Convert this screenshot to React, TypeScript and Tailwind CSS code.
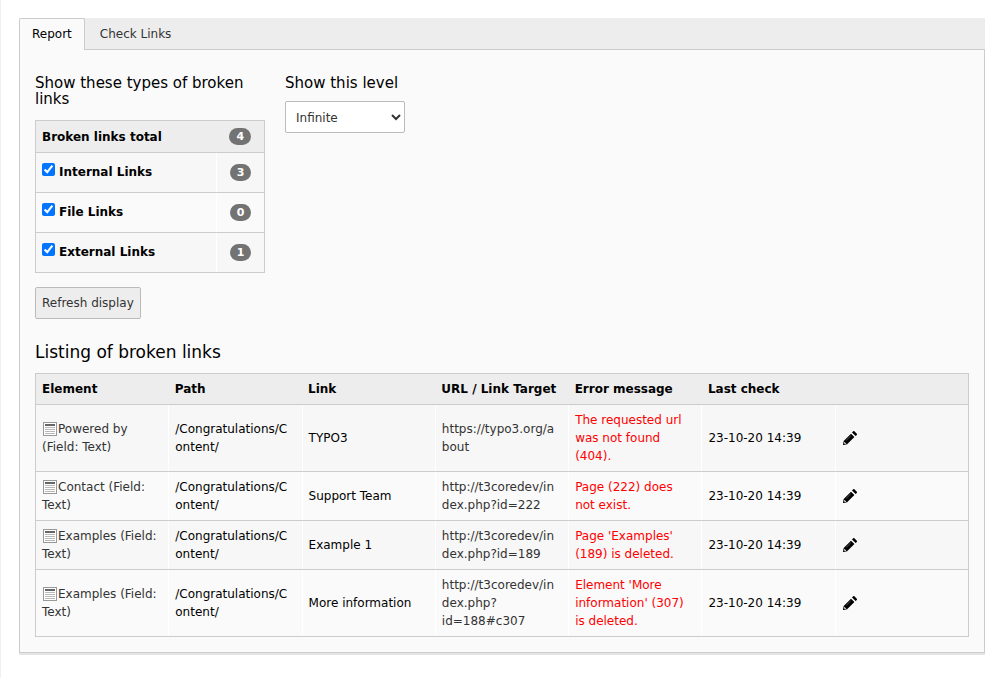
import React, { useState } from 'react';

interface LinkType {
  id: string;
  label: string;
  count: number;
}

interface BrokenLink {
  element: string;
  path: string;
  link: string;
  target: string;
  error: string;
  lastCheck: string;
}

const linkTypes: LinkType[] = [
  { id: 'internal', label: 'Internal Links', count: 3 },
  { id: 'file', label: 'File Links', count: 0 },
  { id: 'external', label: 'External Links', count: 1 },
];

const columns = ['Element', 'Path', 'Link', 'URL / Link Target', 'Error message', 'Last check', ''];

const brokenLinks: BrokenLink[] = [
  {
    element: 'Powered by (Field: Text)',
    path: '/Congratulations/Content/',
    link: 'TYPO3',
    target: 'https://typo3.org/about',
    error: 'The requested url was not found (404).',
    lastCheck: '23-10-20 14:39',
  },
  {
    element: 'Contact (Field: Text)',
    path: '/Congratulations/Content/',
    link: 'Support Team',
    target: 'http://t3coredev/index.php?id=222',
    error: 'Page (222) does not exist.',
    lastCheck: '23-10-20 14:39',
  },
  {
    element: 'Examples (Field: Text)',
    path: '/Congratulations/Content/',
    link: 'Example 1',
    target: 'http://t3coredev/index.php?id=189',
    error: "Page 'Examples' (189) is deleted.",
    lastCheck: '23-10-20 14:39',
  },
  {
    element: 'Examples (Field: Text)',
    path: '/Congratulations/Content/',
    link: 'More information',
    target: 'http://t3coredev/index.php?id=188#c307',
    error: "Element 'More information' (307) is deleted.",
    lastCheck: '23-10-20 14:39',
  },
];

function TextElementIcon() {
  return (
    <svg viewBox="0 0 16 16" className="inline-block h-4 w-4 align-[-4px]" aria-hidden="true">
      <rect x="1.5" y="1.5" width="13" height="13" fill="#fff" stroke="#999" />
      <path d="M3 3h10v2H3z" fill="#666" />
      <path d="M3 6h10v1H3zM3 8h10v1H3zM3 10h10v1H3zM3 12h10v1H3z" fill="#b9b9b9" />
    </svg>
  );
}

function PencilIcon() {
  return (
    <svg viewBox="0 0 16 16" className="h-4 w-4" aria-hidden="true">
      <path
        d="M11.2 1.3a.9.9 0 0 1 1.2 0l2.4 2.4a.9.9 0 0 1 0 1.2l-1.2 1.2-3.6-3.6zM9 3.7l3.4 3.4-7.3 7.2-3.6.7a.5.5 0 0 1-.5-.5l.7-3.6z"
        fill="#000"
      />
      <path d="M8.8 5.8 4.2 10.4" stroke="#777" strokeWidth="0.7" />
      <path d="m2.4 11.8 1.9 1.9-1.4.3-.8-.8z" fill="#fff" />
    </svg>
  );
}

function Badge({ value }: { value: number }) {
  return (
    <span className="inline-block rounded-full bg-[#737373] px-[7px] py-[3px] align-middle text-[11px] leading-[11px] font-bold text-white">
      {value}
    </span>
  );
}

function LinkTypeTable() {
  const [checked, setChecked] = useState<string[]>(linkTypes.map((type) => type.id));

  const toggle = (id: string) => {
    setChecked((prev) => (prev.includes(id) ? prev.filter((item) => item !== id) : [...prev, id]));
  };

  return (
    <table className="w-full table-fixed border-collapse border border-[#ccc]">
      <thead>
        <tr className="h-8 bg-[#ededed]">
          <th className="border-b border-[#ccc] px-1.5 text-left">Broken links total</th>
          <th className="w-12 border-b border-[#ccc] px-1.5 pb-0.5 text-center">
            <Badge value={4} />
          </th>
        </tr>
      </thead>
      <tbody>
        {linkTypes.map((type) => (
          <tr key={type.id} className="h-10 odd:bg-[#f7f7f7]">
            <td className="border-b border-[#ccc] px-1.5 pb-0.5">
              <label className="flex items-start gap-1 font-bold">
                <input
                  type="checkbox"
                  className="h-[13px] w-[13px]"
                  checked={checked.includes(type.id)}
                  onChange={() => toggle(type.id)}
                />
                {type.label}
              </label>
            </td>
            <td className="border-b border-l border-b-[#ccc] border-l-white px-1.5 pb-0.5 text-center">
              <Badge value={type.count} />
            </td>
          </tr>
        ))}
      </tbody>
    </table>
  );
}

function BrokenLinksTable() {
  const cell = 'border-b border-l border-b-[#ccc] border-l-white py-1.5 pr-2.5 pl-1.5';

  return (
    <table className="w-full table-fixed border-collapse border border-[#ccc] break-words">
      <thead>
        <tr className="bg-[#ededed]">
          {columns.map((column) => (
            <th key={column} className="border-b border-[#ccc] p-1.5 text-left whitespace-nowrap">
              {column}
            </th>
          ))}
        </tr>
      </thead>
      <tbody>
        {brokenLinks.map((item) => (
          <tr key={item.target} className="odd:bg-[#f7f7f7]">
            <td className="border-b border-[#ccc] p-1.5 text-[#333]">
              <TextElementIcon />
              {item.element}
            </td>
            <td className={cell}>{item.path}</td>
            <td className={cell}>{item.link}</td>
            <td className={cell}>
              <a href={item.target} className="text-[#333]">
                {item.target}
              </a>
            </td>
            <td className={`${cell} text-[#f00]`}>{item.error}</td>
            <td className={cell}>{item.lastCheck}</td>
            <td className={cell}>
              <button type="button" aria-label="Edit" className="block">
                <PencilIcon />
              </button>
            </td>
          </tr>
        ))}
      </tbody>
    </table>
  );
}

export default function App() {
  return (
    <div className="min-h-screen border-l border-[#f0f0f0] bg-white pt-[18px] pr-[15px] pb-6 pl-[18px] font-['DejaVu_Sans',Verdana,sans-serif] text-xs leading-[18px] text-black">
      <div role="tablist" className="flex bg-[#ededed]">
        <button
          type="button"
          role="tab"
          aria-selected="true"
          className="h-8 rounded-t-xs border border-b-0 border-[#ccc] bg-[#fafafa] px-3 pb-0.5"
        >
          Report
        </button>
        <div className="flex flex-1 border-b border-[#ccc]">
          <button type="button" role="tab" aria-selected="false" className="px-[15px] text-[#333]">
            Check Links
          </button>
        </div>
      </div>

      <main className="border border-t-0 border-[#ccc] bg-[#fafafa] px-[15px] pt-[25px] pb-[15px] shadow-[0_2px_0_#e4e4e4]">
        <div className="flex flex-wrap gap-5">
          <div className="w-[230px]">
            <h3 className="mb-[13px] text-[15px] leading-4">Show these types of broken links</h3>
            <LinkTypeTable />
          </div>
          <div className="w-[230px]">
            <label htmlFor="level" className="mb-2.5 block text-[15px] leading-4">
              Show this level
            </label>
            <select
              id="level"
              defaultValue="infinite"
              className="h-8 w-[120px] rounded-xs border border-[#bbb] bg-white px-1.5 pt-0.5 text-[#333]"
            >
              <option value="0">This page</option>
              <option value="1">1 level</option>
              <option value="infinite">Infinite</option>
            </select>
          </div>
        </div>

        <button
          type="button"
          className="mt-3.5 h-8 rounded-xs border border-[#bbb] bg-[#ededed] px-1.5 text-[#333]"
        >
          Refresh display
        </button>

        <h2 className="mt-6 mb-3 text-[17px] leading-[18px]">Listing of broken links</h2>
        <BrokenLinksTable />
      </main>
    </div>
  );
}
